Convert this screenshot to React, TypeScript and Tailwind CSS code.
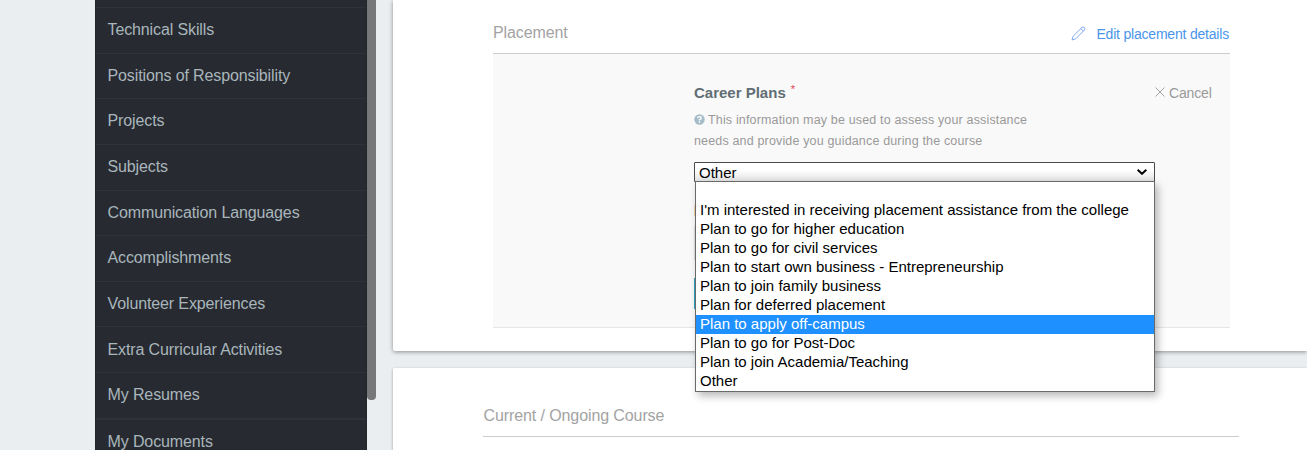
import React from "react";

const NAV = [
  { label: "Technical Skills", row: "h-[46px] pt-[12px]" },
  { label: "Positions of Responsibility", row: "h-[45px] pt-[12px]" },
  { label: "Projects", row: "h-[46px] pt-[12px]" },
  { label: "Subjects", row: "h-[46px] pt-[12px]" },
  { label: "Communication Languages", row: "h-[45px] pt-[12px]" },
  { label: "Accomplishments", row: "h-[46px] pt-[12px]" },
  { label: "Volunteer Experiences", row: "h-[45px] pt-[12px]" },
  { label: "Extra Curricular Activities", row: "h-[46px] pt-[13px]" },
  { label: "My Resumes", row: "h-[46px] pt-[12px]" },
  { label: "My Documents", row: "h-[47px] border-t-2 pt-[12px]" },
];

const OPTIONS = [
  "",
  "I'm interested in receiving placement assistance from the college",
  "Plan to go for higher education",
  "Plan to go for civil services",
  "Plan to start own business - Entrepreneurship",
  "Plan to join family business",
  "Plan for deferred placement",
  "Plan to apply off-campus",
  "Plan to go for Post-Doc",
  "Plan to join Academia/Teaching",
  "Other",
];

function Sidebar() {
  return (
    <nav className="flex w-[281px] shrink-0">
      <div className="w-[272px] border-x border-[#22252a] bg-[#272a30] pt-[7px]">
        {NAV.map((item) => (
          <div
            key={item.label}
            className={`border-t border-[#303236] pl-[11.5px] text-[16px] leading-[20px] tracking-[-0.12px] text-[#a9b6bc] ${item.row}`}
          >
            {item.label}
          </div>
        ))}
      </div>
      <div className="h-[400px] w-[9px] rounded-b-[4px] bg-[#777879]" />
    </nav>
  );
}

function PencilIcon() {
  return (
    <svg width="15" height="15" viewBox="0 0 15 15" fill="none" stroke="#6f9ff0" strokeWidth="0.9" strokeLinejoin="round">
      <path d="M1 14 L2.2 10.2 L10.8 1.6 Q12 .4 13.3 1.6 Q14.6 2.9 13.4 4.1 L4.8 12.7 Z" />
      <path d="M9.7 2.7 L12.3 5.2" />
    </svg>
  );
}

function PlacementSelect() {
  return (
    <div className="relative mt-[10px] h-[20px] w-[461px]">
      <div className="flex h-[20px] items-center justify-between rounded-t-[1px] border border-[#4a4a4a] bg-linear-to-b from-white from-40% to-[#e2e2e2] pr-[7px] pl-[4px] text-[15px] text-black">
        <span className="pt-[1px] leading-[20px]">Other</span>
        <svg width="10" height="6" viewBox="0 0 10 6" fill="none" stroke="#000" strokeWidth="2">
          <path d="M.6 .8 L5 4.8 L9.4 .8" />
        </svg>
      </div>
      <ul className="absolute top-[19px] left-[1px] z-10 w-[460px] border border-[#6a6a6a] bg-white text-[15px] text-black shadow-[3px_4px_8px_rgba(0,0,0,0.28)]">
        {OPTIONS.map((option, i) => (
          <li key={i} className={`h-[19px] pl-[4px] leading-[18px] ${i === 7 ? "bg-[#1e90ff] text-white" : ""}`}>
            {option}
          </li>
        ))}
      </ul>
    </div>
  );
}

function PlacementCard() {
  return (
    <section className="h-[351px] rounded-bl-[2px] bg-white pl-[100px] shadow-[0_1px_4px_rgba(0,0,0,0.4)]">
      <header className="flex h-[54px] w-[737px] justify-between border-b border-[#cacfce] pt-[23px] pr-[1px]">
        <h2 className="text-[16px] leading-[20px] tracking-[-0.1px] text-[#a3a3a3]">Placement</h2>
        <a className="flex h-[24px] items-center text-[14px] tracking-[-0.2px] text-[#4a95ea]">
          <span className="mr-[10px] mb-[4px]"><PencilIcon /></span>
          <span className="mb-[1px]">Edit placement details</span>
        </a>
      </header>
      <div className="flex h-[274px] w-[737px] border-b border-[#e6e6e6] bg-[#f9f9f9] pl-[201px]">
        <div className="w-[460px] pt-[29px]">
          <h3 className="flex h-[20px] text-[15px] leading-[20px] font-bold text-[#606d74]">
            Career Plans
            <span className="ml-[5px] text-[11px] leading-[12px] font-normal text-[#e04050]">*</span>
          </h3>
          <p className="mt-[7px] w-[350px] text-[12.5px] leading-[21px] tracking-[0.16px] whitespace-nowrap text-[#999]">
            <svg className="mr-[3px] inline-block align-[-1px]" width="11" height="11" viewBox="0 0 11 11">
              <circle cx="5.5" cy="5.5" r="5.2" fill="#a6bdc9" />
              <path d="M3.7 4.2 Q3.9 2.6 5.5 2.6 Q7.3 2.6 7.3 4.1 Q7.3 5.1 5.5 5.8 V6.5 M5.5 7.3 V8.7" fill="none" stroke="#fff" strokeWidth="1.4" />
            </svg>
            This information may be used to assess your assistance
            <br />
            needs and provide you guidance during the course
          </p>
          <PlacementSelect />
          <div className="mt-[23px] h-[11px] w-[3px] bg-[#f4d7a8]" />
          <div className="mt-[10px] h-[34px] w-[3px] bg-[#dedede]" />
          <div className="mt-[18px] h-[31px] w-[3px] bg-[#2ba5c3]" />
        </div>
        <div className="mt-[29px] flex h-[20px] items-center text-[14px] tracking-[-0.15px] text-[#999]">
          <svg className="mr-[4px] mb-[2px] ml-px" width="10" height="10" viewBox="0 0 10 10" fill="none" stroke="#999" strokeWidth="0.9">
            <path d="M.5 .5 L9.5 9.5 M9.5 .5 L.5 9.5" />
          </svg>
          Cancel
        </div>
      </div>
    </section>
  );
}

export default function App() {
  return (
    <div className="flex h-[450px] w-[1307px] overflow-hidden bg-[#eaeef1] pl-[95px] font-['Liberation_Sans',Arial,sans-serif]">
      <Sidebar />
      <main className="ml-[17px] w-[914px] shrink-0">
        <div className="relative z-10">
          <PlacementCard />
        </div>
        <section className="mt-[17px] h-[100px] rounded-tl-[2px] bg-white pl-[90px] shadow-[0_1px_3px_rgba(0,0,0,0.35)]">
          <h2 className="h-[69px] w-[756px] border-b border-[#cccccc] pt-[38px] pl-[0.5px] text-[16px] leading-[20px] tracking-[-0.1px] text-[#a3a3a3]">
            Current / Ongoing Course
          </h2>
        </section>
      </main>
    </div>
  );
}
